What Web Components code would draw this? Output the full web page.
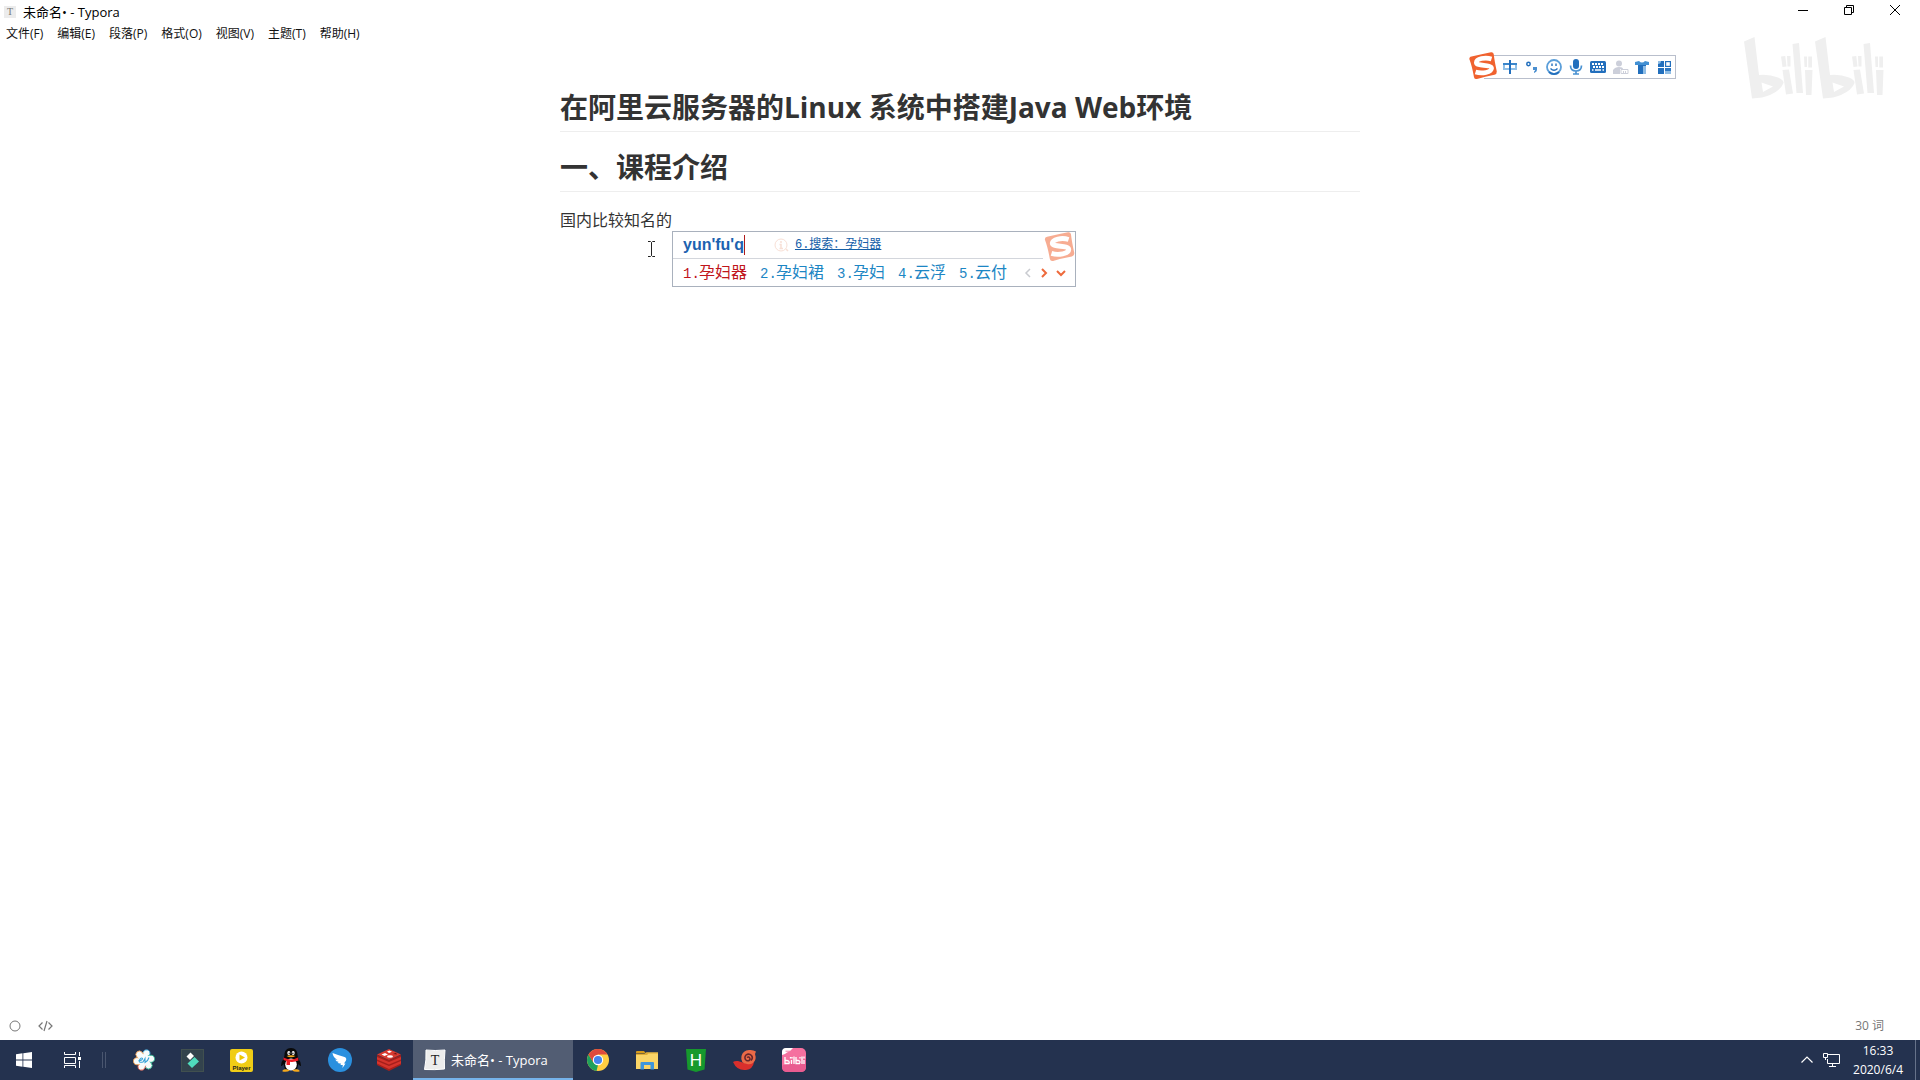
<!DOCTYPE html>
<html lang="zh-CN">
<head>
<meta charset="utf-8">
<title>未命名• - Typora</title>
<style>
  html, body { height: 100%; margin: 0; }
  body { background: #fff; color: #000; overflow: hidden; font-family: "Open Sans", "Noto Sans CJK SC", sans-serif; font-size: 12px; }
</style>
</head>
<body>
<typora-desktop></typora-desktop>

<script>
const define = (name, html, setup) => customElements.define(name, class extends HTMLElement {
  constructor() {
    super();
    const t = document.createElement('template');
    t.innerHTML = html;
    this.attachShadow({ mode: 'open' }).append(t.content.cloneNode(true));
  }
  connectedCallback() { if (setup) setup(this, this.shadowRoot); }
});

/* Sogou "S" badge */
define('sogou-logo', `
<style>:host{display:block;width:28px;height:28px} svg{display:block;width:100%;height:100%}</style>
<svg viewBox="0 0 28 28" aria-hidden="true">
  <path d="M2.500 4.500Q13 2 22 .3Q24.300 0 24.700 2Q25.500 9 27.800 19.500Q28 22 25.500 22.800Q16 24.500 8 27Q5.600 27.600 5 25.200Q3 14 .4 7.300Q0 5 2.500 4.500Z" fill="#f0622f"/>
  <path d="M22.500 7C16 5 7.500 6.800 7.300 10.500C7.200 14.700 22.300 12 22.600 16.200C22.500 20.300 13 22 6.500 20" fill="none" stroke="#fff" stroke-width="4.600"/>
</svg>`);

define('win-controls', `
<style>
  :host{display:flex;padding-right:2px}
  button{border:0;background:none;padding:0;width:46px;height:20px;display:flex;align-items:center;justify-content:center}
  svg{display:block}
</style>
<button aria-label="最小化"><svg width="10" height="10" viewBox="0 0 10 10"><path d="M0 5.500H10" stroke="#000"/></svg></button>
<button aria-label="还原"><svg width="10" height="10" viewBox="0 0 10 10" fill="none" stroke="#000"><path d="M.5 2.500H7.500V9.500H.5ZM2.500 2.500V.5H9.500V7.500H7.500"/></svg></button>
<button aria-label="关闭"><svg width="10" height="10" viewBox="0 0 10 10"><path d="M0 0L10 10M10 0L0 10" stroke="#000"/></svg></button>`);

define('title-bar', `
<style>
  :host{display:flex;justify-content:space-between;align-items:flex-start;height:22px;padding-left:4px}
  .t{display:flex;align-items:center;gap:7px;height:24px;font-size:13px;line-height:16px;white-space:nowrap}
  .i{width:12px;height:12px;background:#ececec;color:#777;font:10px/12px "Liberation Serif",serif;text-align:center}
</style>
<div class="t"><span class="i">T</span><span><slot></slot></span></div>
<win-controls></win-controls>`);

define('menu-bar', `
<style>
  :host{display:flex;gap:14px;padding:0 6px;height:24px;align-items:center}
  ::slotted(button){border:0;background:none;padding:0;margin:0;font:inherit;line-height:16px;color:#111;white-space:nowrap}
</style><slot></slot>`);

define('ime-candidate', `
<style>
  :host{display:inline-block;color:#1c86c4;font:16px/20px "Noto Sans CJK SC",sans-serif;white-space:nowrap}
  :host([selected]){color:#c0151b}
  .n{display:inline-block;width:16px;font-family:"Liberation Mono",monospace;font-size:14px}
</style><span class="n"></span><slot></slot>`,
 (el, r) => { r.querySelector('.n').textContent = el.getAttribute('n') + '.'; });

define('ime-panel', `
<style>
  :host{display:block;box-sizing:border-box;width:404px;border:1px solid #a9b1bd;background:#fff;position:relative}
  .top{display:flex;align-items:center;height:26px;padding-left:10px;margin-right:32px;border-bottom:1px solid #d3d6dc}
  .py{font:bold 16px/20px "Liberation Sans",sans-serif;color:#1c62b0;border-right:1px solid #b01c1c}
  .info{margin:0 6px 0 29px}
  a{color:#1560a8;font:12px/16px "Liberation Mono","Noto Sans CJK SC",monospace;text-decoration:underline;white-space:nowrap}
  .row{display:flex;align-items:center;height:27px;padding-left:10px;gap:13px}
  .nav{display:flex;gap:8px;margin-left:4px}
  .nav button{border:0;background:none;padding:0;width:8px;height:10px;display:flex;align-items:center}
  .nav button:last-child{width:10px}
  sogou-logo{position:absolute;right:0;top:0;width:31px;height:30px;opacity:.52}
</style>
<div class="top"><span class="py">yun'fu'q</span>
<svg class="info" width="15" height="14" viewBox="0 0 15 14" fill="none" stroke="#f8e0d6"><circle cx="7" cy="7" r="6"/><path d="M12 11l2 2M7 3v2M5.500 6.500H7V10M5.500 10.500H9" stroke-width="1.500"/></svg>
<a href="#">6.搜索：孕妇器</a></div>
<div class="row"><slot></slot>
<div class="nav">
<button aria-label="上一页"><svg width="8" height="10" viewBox="0 0 8 10"><path d="M6 1L2 5L6 9" fill="none" stroke="#c9cbd0" stroke-width="1.500"/></svg></button>
<button aria-label="下一页"><svg width="8" height="10" viewBox="0 0 8 10"><path d="M2 1L6 5L2 9" fill="none" stroke="#ee6a3c" stroke-width="2"/></svg></button>
<button aria-label="展开"><svg width="10" height="10" viewBox="0 0 10 10"><path d="M1 3L5 7L9 3" fill="none" stroke="#ee6a3c" stroke-width="2"/></svg></button>
</div></div>
<sogou-logo></sogou-logo>`);

define('ime-toolbar', `
<style>
  :host{display:flex;align-items:center;box-sizing:border-box;width:192px;height:24px;border:1px solid #b9bfcc;border-left:0;background:#fff;padding-left:17px;gap:4px}
  button{border:0;background:none;padding:0;width:18px;height:18px;display:flex;align-items:center;justify-content:center}
  svg{display:block}
  sogou-logo{position:absolute;left:-15px;top:-4px}
</style>
<sogou-logo></sogou-logo>
<button aria-label="中文"><svg width="14" height="14" viewBox="0 0 14 14" fill="none"><path d="M1 4.500V9H13V4.500" stroke="#8fc0e8" stroke-width="2"/><path d="M0 4H14" stroke="#3a86cb" stroke-width="2"/><path d="M7 0V14" stroke="#226fbd" stroke-width="2"/></svg></button>
<button aria-label="标点"><svg width="14" height="14" viewBox="0 0 14 14"><circle cx="3.500" cy="4" r="1.700" fill="none" stroke="#226fbd" stroke-width="1.500"/><path d="M8 7h4v3q0 2-3 3v-1.500q1-.5 1-1.500H8z" fill="#4a8fd0"/></svg></button>
<button aria-label="表情"><svg width="16" height="16" viewBox="0 0 16 16" fill="none"><circle cx="8" cy="8" r="7" stroke="#5b9fda" stroke-width="1.800"/><path d="M3 13A7 7 0 0 0 13 13" stroke="#226fbd" stroke-width="1.800"/><path d="M6 4.500V7M10 4.500V7M4.500 9.500q3.500 3.500 7 0" stroke="#226fbd" stroke-width="1.400"/></svg></button>
<button aria-label="语音"><svg width="14" height="16" viewBox="0 0 14 16"><rect x="4" y="0" width="6" height="10" rx="3" fill="#226fbd"/><path d="M1.500 6.500q0 5.500 5.500 5.500t5.500-5.500M7 12v3M4 15h6" fill="none" stroke="#4a92d2" stroke-width="1.700"/></svg></button>
<button aria-label="键盘"><svg width="16" height="12" viewBox="0 0 16 12"><rect width="16" height="12" rx="1.500" fill="#226fbd"/><path d="M2 3H14M3 6H14" stroke="#fff" stroke-width="2" stroke-dasharray="2 1"/><path d="M2 9H3.500M5 9H11M12.500 9H14" stroke="#fff" stroke-width="1.500"/></svg></button>
<button aria-label="账号"><svg width="17" height="15" viewBox="0 0 17 15" fill="#cccfda"><circle cx="7" cy="3.500" r="3"/><path d="M1 14V10Q3 7 7 7T11 9H8V14Z"/><path d="M9 9.500h7v4H9z" fill="#fff" stroke="#cccfda"/><path d="M11.500 11v2M13.500 11v2" stroke="#cccfda"/></svg></button>
<button aria-label="皮肤"><svg width="14" height="14" viewBox="0 0 14 14"><path d="M0 2L4 1Q7 4 10 1L14 2V5H0Z" fill="#4290d3"/><path d="M3 5H11V14H3Z" fill="#226fbd"/><path d="M8 6h3v8H8z" fill="#8fbde5"/></svg></button>
<button aria-label="工具箱"><svg width="13" height="13" viewBox="0 0 13 13"><path d="M0 0H6V6H0ZM0 7H6V13H0Z" fill="#226fbd"/><path d="M0 0h3q0 3-3 3zM7 7h6v6H7z" fill="#8fbde5"/><path d="M7 7h6v3H7z" fill="#2f78c2"/><rect x="7.600" y=".6" width="4.800" height="4.800" fill="#fff" stroke="#226fbd" stroke-width="1.200"/></svg></button>`);

/* bilibili mark: stems, bowls and antennae */
define('bili-mark', `
<style>:host{display:block;width:142px;height:64px} svg{display:block;width:100%;height:100%}</style>
<svg viewBox="0 0 142 64" role="img" aria-label="bilibili" fill="#efefef">
  <defs><g id="h">
    <path fill-rule="evenodd" d="M0 5.500L10.500 1L15 39Q25 38 34 41.500Q40 44 39.500 47Q37 54 26 59Q19 62 8 62.500ZM17.500 46.500L19 56L29 50.500Z"/>
    <path d="M37 20.500L41.300 20L42.500 30.500L38.500 31ZM43 20H46.500V30.500H43.500ZM38.500 34L45 33.500L49 57.500L42 58.500ZM48.500 8L55 7L59 57H52.500ZM60 20.500H63V31H60.500ZM64.300 20.500H68V31.500H64.300ZM61 34H68.500L67.500 59H62Z"/>
  </g></defs>
  <use href="#h"/><use href="#h" x="71"/>
</svg>`);

define('doc-editor', `
<style>
  :host{display:block;box-sizing:border-box;width:100%;max-width:800px;margin:0 auto;padding-top:43px;color:#333;font-size:16px}
  h1,h2{margin:0;padding-bottom:6px;font-size:28px;line-height:36px;font-weight:700;border-bottom:1px solid #eee;color:#333}
  h2{margin-top:17px}
  p{margin:15px 0;line-height:26px}
  .at{position:relative}
  ime-panel{position:absolute;left:0;top:22px}
  .cur{position:absolute;left:-24px;top:32px}
</style>
<h1>在阿里云服务器的Linux 系统中搭建Java Web环境</h1>
<h2>一、课程介绍</h2>
<p>国内比较知名的<span class="at"><svg class="cur" width="8" height="16" viewBox="0 0 8 16" fill="none" stroke="#222"><path d="M0 .5H2.500L3.500 1.500L4.500 .5H7M3.500 1.500V14.500M0 15.500H2.500L3.500 14.500L4.500 15.500H7"/></svg><ime-panel>
<ime-candidate n="1" selected>孕妇器</ime-candidate><ime-candidate n="2">孕妇裙</ime-candidate><ime-candidate n="3">孕妇</ime-candidate><ime-candidate n="4">云浮</ime-candidate><ime-candidate n="5">云付</ime-candidate>
</ime-panel></span></p>`);

define('status-bar', `
<style>
  :host{display:flex;justify-content:space-between;align-items:center;height:28px;padding:0 36px 0 9px;color:#777}
  .l{display:flex;align-items:center;gap:17px}
  button{border:0;background:none;padding:0;display:flex;color:inherit;font:12px/16px "Open Sans","Noto Sans CJK SC",sans-serif}
</style>
<div class="l">
<button aria-label="侧边栏"><svg width="12" height="12" viewBox="0 0 12 12"><circle cx="6" cy="6" r="5" fill="none" stroke="#777"/></svg></button>
<button aria-label="源代码模式"><svg width="15" height="12" viewBox="0 0 15 12" fill="none" stroke="#777" stroke-width="1.200"><path d="M4.500 2.500L1 6L4.500 9.500M10.500 2.500L14 6L10.500 9.500M9 1L6 11"/></svg></button>
</div>
<button>30 词</button>`);

define('task-item', `
<style>
  :host{display:block;width:49px;height:40px}
  :host([narrow]){width:48px}
  :host([active]){width:160px}
  button{box-sizing:border-box;width:100%;height:40px;border:0;margin:0;padding:0;background:none;display:flex;align-items:center;justify-content:center;gap:5px;color:#fff;font:13px/16px "Open Sans","Noto Sans CJK SC",sans-serif;white-space:nowrap}
  :host([active]) button{background:#525d73;border-bottom:2px solid #76b3ea;padding:2px 0 0 11px;justify-content:flex-start}
  ::slotted(svg){display:block;flex:none}
</style><button><slot></slot></button>`,
 (el, r) => r.querySelector('button').setAttribute('aria-label', el.getAttribute('label')));

define('tray-area', `
<style>
  :host{display:flex;align-items:center;color:#fff;height:40px}
  button{border:0;background:none;padding:0;display:flex;color:inherit}
  .net{margin:0 13px 0 10px}
  .clock{display:flex;flex-direction:column;align-items:center;line-height:19px;font-size:12px;white-space:nowrap}
  .peek{box-sizing:border-box;width:5px;height:40px;border-left:1px solid #66728a;margin-left:12px}
</style>
<button aria-label="显示隐藏的图标"><svg width="12" height="8" viewBox="0 0 12 8"><path d="M.5 6.500L6 1L11.500 6.500" fill="none" stroke="#fff" stroke-width="1.200"/></svg></button>
<button class="net" aria-label="网络"><svg width="17" height="14" viewBox="0 0 17 14" fill="none" stroke="#fff"><path d="M5 1.500H16.500V10.500H4.500V6M9.500 10.500V13M6 13.500H13M.5 .5H4.500V4.500H.5ZM2.500 4.500V7"/></svg></button>
<div class="clock"><time>16:33</time><time>2020/6/4</time></div>
<button class="peek" aria-label="显示桌面"></button>`);

define('task-bar', `
<style>
  :host{display:flex;justify-content:space-between;height:40px;background:#24324f}
  .apps{display:flex}
  .sep{box-sizing:border-box;width:4px;height:16px;margin:12px 13px 0 6px;border:solid #4a566f;border-width:0 1px}
</style>
<div class="apps">
<task-item narrow label="开始"><svg width="16" height="16" viewBox="0 0 16 16" fill="#fff"><path d="M0 2.300L6.500 1.300V7.600H0ZM7.300 1.200L16 0V7.600H7.300ZM0 8.400H6.500V14.700L0 13.700ZM7.300 8.400H16V16L7.300 14.800Z"/></svg></task-item>
<task-item narrow label="任务视图"><svg width="17" height="16" viewBox="0 0 17 16" fill="none" stroke="#fff"><path d="M.5 0V2.500H11.500V0M.5 5.500H11.500V11.500H.5ZM.5 16V13.500H11.500V16M15.500 0V4M15.500 9V16"/><path d="M14 5H17V8H14Z" fill="#fff" stroke="none"/></svg></task-item>
<div class="sep"></div>
<task-item label="EV录屏"><svg width="22" height="22" viewBox="0 0 22 22"><g fill="#f7fbfb" stroke-width=".8"><ellipse cx="11" cy="4.700" rx="3.600" ry="4.400" stroke="#3ba7d8" transform="rotate(20 11 11)"/><ellipse cx="11" cy="4.700" rx="3.600" ry="4.400" stroke="#2bb58f" transform="rotate(80 11 11)"/><ellipse cx="11" cy="4.700" rx="3.600" ry="4.400" stroke="#2bb58f" transform="rotate(140 11 11)"/><ellipse cx="11" cy="4.700" rx="3.600" ry="4.400" stroke="#e65f4d" transform="rotate(200 11 11)"/><ellipse cx="11" cy="4.700" rx="3.600" ry="4.400" stroke="#ef9a4a" transform="rotate(260 11 11)"/><ellipse cx="11" cy="4.700" rx="3.600" ry="4.400" stroke="#ef9a4a" transform="rotate(320 11 11)"/></g><circle cx="11" cy="11" r="6" fill="#f7fbfb"/><path d="M5.500 11.500Q9.500 11.500 9.500 9.500Q8 8 6.500 11T10 13L12 9.500V13.500Q15 12 16 8.500" fill="none" stroke="#38a3d8" stroke-width="1.100"/></svg></task-item>
<task-item label="Filmora"><svg width="23" height="23" viewBox="0 0 23 23"><rect x=".5" y=".5" width="22" height="22" fill="#33434d" stroke="#41504f"/><path d="M9.500 3.500L13 7L9 11L5.500 7.500Z" fill="#fff"/><path d="M13.500 8L18 12.500L11 19L6.500 14.500Z" fill="#4fdcbd"/></svg></task-item>
<task-item label="Player"><svg width="23" height="23" viewBox="0 0 23 23"><rect width="23" height="23" rx="2" fill="#f0cd16"/><circle cx="11.500" cy="8.500" r="6" fill="#fff"/><path d="M9.500 5.500L15 8.500L9.500 11.500Z" fill="#eec600"/><text x="11.500" y="20.500" font-family="Liberation Sans, sans-serif" font-size="6" font-weight="700" text-anchor="middle" fill="#222">Player</text></svg></task-item>
<task-item label="QQ"><svg width="22" height="24" viewBox="0 0 22 24"><path d="M11 0C6.500 0 4.500 3 4.500 7L4 10Q1 14 1 17.500Q1.500 19 3.500 16L5 21H17L18.500 16Q20.500 19 21 17.500Q21 14 18 10L17.500 7C17.500 3 15.500 0 11 0Z" fill="#090909"/><ellipse cx="11" cy="16.500" rx="5.800" ry="6" fill="#fff"/><ellipse cx="8.800" cy="5" rx="1.500" ry="2" fill="#fff"/><ellipse cx="13.200" cy="5" rx="1.500" ry="2" fill="#fff"/><circle cx="9.200" cy="5.200" r=".7"/><circle cx="12.900" cy="5.200" r=".7"/><path d="M6.500 8Q11 6.500 15.500 8Q11 10.500 6.500 8Z" fill="#f6a91c"/><path d="M3.500 9.500Q11 13.500 18 9.500L18.500 12.500Q14 14.500 10 13.800V17H6.500V13L3.500 12Z" fill="#ec1c24"/><path d="M2.500 22.500Q5 20 10 22.500Q7 24.500 2.500 23.500ZM12 22.500Q17 20 19.500 22.500V23.500Q15 24.500 12 22.500Z" fill="#f6a91c"/></svg></task-item>
<task-item label="钉钉"><svg width="24" height="24" viewBox="0 0 24 24"><circle cx="12" cy="12" r="12" fill="#2a90df"/><path d="M4.500 5Q11 7.500 16.500 9Q19 10 18 12.500L16 15.500H17.500L14.500 20L14.800 17H12.500L13 15.500Q10.500 15.800 9.500 14.500L11 14Q8 13.500 7.200 11.500L9.500 11.700Q5 9.500 4.500 5Z" fill="#fff"/></svg></task-item>
<task-item label="Redis"><svg width="24" height="22" viewBox="0 0 24 22"><path d="M0 6L12 11L24 6V16L12 22L0 16Z" fill="#a51f1b"/><path d="M0 12L12 17L24 12V14.500L12 20L0 14.500ZM0 8L12 13L24 8V10.500L12 15.500L0 10.500Z" fill="#d6342c"/><path d="M12 0L24 5.500L12 11L0 5.500Z" fill="#d93a30"/><path d="M4.500 5.500L8 4L11 5.500L7.500 7ZM10 2.500L12.500 1.500L15 2.800L12 4Z" fill="#fff"/><ellipse cx="13" cy="7.500" rx="3" ry="1.200" fill="#fff"/><path d="M16 5L19 3.700L20 5.500Z" fill="#701310"/></svg></task-item>
<task-item active label="未命名• - Typora"><svg width="22" height="22" viewBox="0 0 22 22"><path d="M2 1Q11 2 21 1Q20 11 20.500 20Q11 21 .5 20.500Q2.500 11 2 1Z" fill="#ececec" stroke="#fff"/><text x="11" y="16" font-family="Liberation Serif, serif" font-size="14" text-anchor="middle" fill="#222">T</text></svg><span>未命名• - Typora</span></task-item>
<task-item label="Chrome"><svg width="22" height="22" viewBox="0 0 22 22"><circle cx="11" cy="11" r="11" fill="#ffcd41"/><path d="M1.500 5.500L6.500 13.500L11 16L9.500 21.900A11 11 0 0 1 1.500 5.500Z" fill="#1fa15c"/><path d="M11 5.500H20.500A11 11 0 0 0 1.500 5.500L6 13Z" fill="#df4a3d"/><circle cx="11" cy="11" r="5.200" fill="#fff"/><circle cx="11" cy="11" r="4.100" fill="#4484ee"/></svg></task-item>
<task-item label="文件资源管理器"><svg width="22" height="19" viewBox="0 0 22 19"><path d="M0 1Q0 0 1 0H8L10 2.500H0Z" fill="#d79b1c"/><path d="M0 3H9L10.500 1.500H22V18H0Z" fill="#fbd567"/><path d="M0 4H11L12.500 2.500H22V1.500H10L8.500 3H0Z" fill="#e0ac35"/><path d="M4.500 18V12Q4.500 11 5.500 11H17Q18 11 18 12V18.500H14.500V14H8V18.500H4.500Z" fill="#3f96dc"/></svg></task-item>
<task-item label="HBuilder"><svg width="20" height="23" viewBox="0 0 20 23"><path d="M0 0H20L18.500 20.500L10 23L1.500 20.500Z" fill="#16992d"/><text x="10" y="17" font-family="Liberation Sans, sans-serif" font-size="17" text-anchor="middle" fill="#fff">H</text></svg></task-item>
<task-item label="Navicat"><svg width="24" height="22" viewBox="0 0 24 22"><path d="M0 13Q2 11.500 5 12Q11 14 15 14.500L21 13Q20 20 13 21Q4 22 0 13Z" fill="#d92f2c"/><path d="M14 15Q7 14 8.500 7Q10 1.500 16 1Q20 .5 23 2.500L22 5Q24 11 20 14Q17 16 14 15Z" fill="#eb6a47"/><path d="M18 11.500Q20.500 9 18.500 6.500Q16 4 13 6Q10.500 9 13.500 11.500Q17 12.500 17 9.500Q16 7 14 8.500" fill="none" stroke="#66262c" stroke-width="1.500"/></svg></task-item>
<task-item label="哔哩哔哩投稿工具"><svg width="24" height="24" viewBox="0 0 24 24"><rect width="24" height="24" rx="5" fill="#f5709f"/><path d="M1 17L24 11V19Q24 24 19 24H5Q0 24 0 19Z" fill="#e95c90"/><path d="M0 7V4Q0 0 4 0H11Q8 3.500 6 4Q4 5 3 6Z" fill="#fff"/><path d="M3 9V15.500H7Q8 13 5 12.500H3M9.500 12V16M12 8.500V16M14 9V15.500H17.500Q19 13 16 12.500H14M20 8.500V16M22 12V16M8.500 9V10.500M10 9V10.500M18 9V10.500M22 8.500V10.500" fill="none" stroke="#fff" stroke-width="1.300"/><path d="M3.500 3.200H8" stroke="#ef7ca4"/></svg></task-item>
</div>
<tray-area></tray-area>`);

define('typora-desktop', `
<style>
  :host{display:flex;flex-direction:column;height:100vh;position:relative}
  main{flex:1;min-height:0}
  ime-toolbar{position:absolute;right:244px;top:55px}
  bili-mark{position:absolute;right:34px;top:36px}
</style>
<title-bar>未命名• - Typora</title-bar>
<menu-bar><button>文件(F)</button><button>编辑(E)</button><button>段落(P)</button><button>格式(O)</button><button>视图(V)</button><button>主题(T)</button><button>帮助(H)</button></menu-bar>
<main><doc-editor></doc-editor></main>
<status-bar></status-bar>
<task-bar></task-bar>
<bili-mark></bili-mark>
<ime-toolbar></ime-toolbar>`);
</script>
</body>
</html>
